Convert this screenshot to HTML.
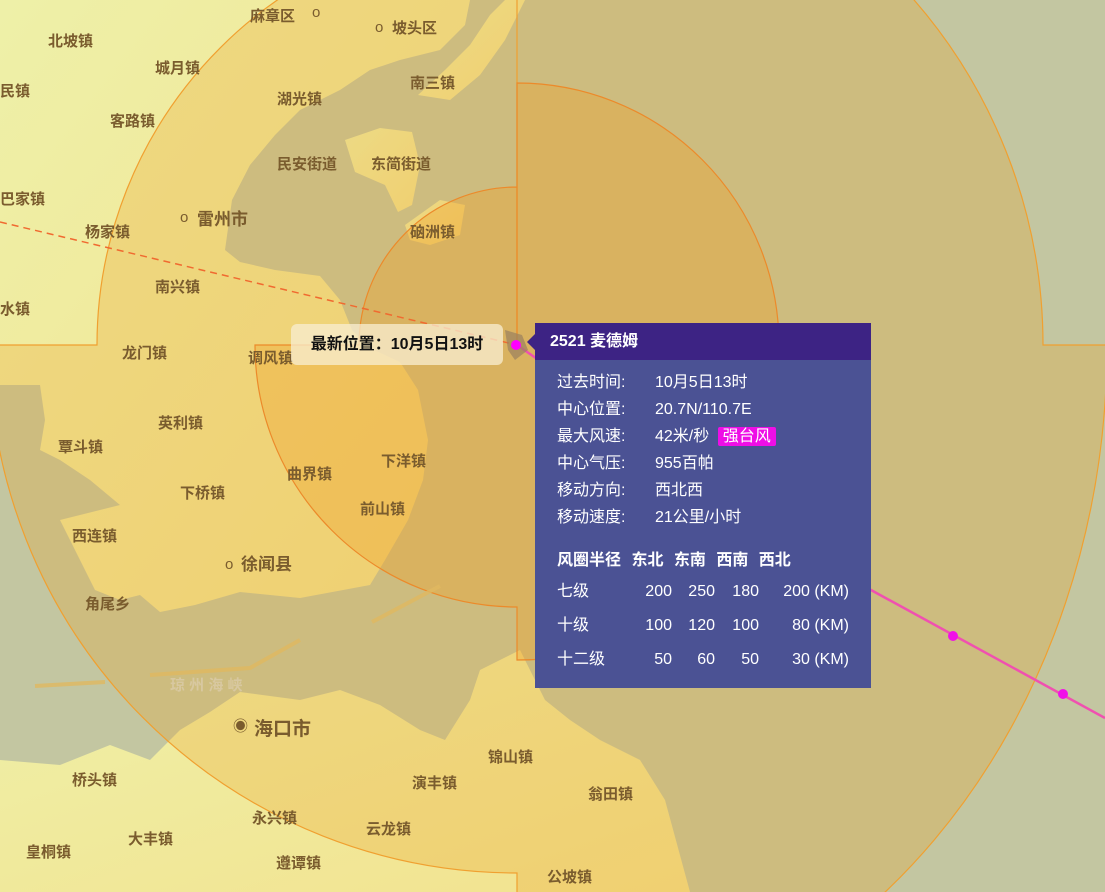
<!DOCTYPE html>
<html><head><meta charset="utf-8"><style>
html,body{margin:0;padding:0;width:1105px;height:892px;overflow:hidden;background:#c3c6a1;font-family:"Liberation Sans","Noto Sans CJK SC",sans-serif;position:relative}
svg{position:absolute;left:0;top:0}
.t{font-family:"Liberation Sans","Noto Sans CJK SC",sans-serif;font-size:15px;fill:#7a5c2e;font-weight:bold}
#lbl{position:absolute;left:291px;top:324px;width:212px;height:41px;background:rgba(248,238,210,.75);border-radius:6px;font-weight:bold;font-size:16px;line-height:41px;text-align:center;color:#111}
#pop{position:absolute;left:535px;top:323px;width:336px;height:365px;background:#4b5294;color:#fff;font-size:16px}
#pop .h{height:37px;background:#3d2384;font-weight:bold;font-size:16px;line-height:37px;padding-left:15px}
#pop .h:before{content:"";position:absolute;left:-8px;top:11px;border:8px solid transparent;border-right-color:#3d2384;border-left:0}
.r{position:absolute;left:22px;white-space:nowrap;line-height:27px;height:27px}
.r span{position:absolute;left:98px;top:0}
.tag{background:#ee0ee6;padding:1px 5px;border-radius:2px;margin-left:4px;font-style:normal}
.k{position:absolute;left:22px;white-space:nowrap;width:310px;height:30px;line-height:30px}
.k b{position:absolute;top:0;text-align:right;font-weight:normal;line-height:30px}
</style></head><body>
<svg width="1105" height="892" viewBox="0 0 1105 892">
<defs><linearGradient id="lg" x1="0" y1="0" x2="1" y2="1"><stop offset="0" stop-color="#eef0a8"/><stop offset="1" stop-color="#f3e28e"/></linearGradient></defs>
<path fill="url(#lg)" d="M0,0 L470,0 L465,25 L440,50 L400,60 L370,70 L340,90 L300,110 L275,135 L250,165 L232,200 L225,250 L240,262 L275,270 L320,276 L340,300 L352,330 L370,348 L400,362 L418,390 L428,440 L423,480 L408,520 L385,560 L370,585 L300,598 L240,592 L195,605 L160,612 L140,595 L120,600 L95,590 L80,560 L60,520 L120,505 L90,480 L60,460 L40,450 L45,420 L40,385 L0,385 Z"/>
<path fill="url(#lg)" d="M345,140 L380,128 L412,132 L420,165 L412,205 L398,212 L385,185 L355,172 Z"/>
<path fill="url(#lg)" d="M418,95 L445,70 L470,45 L490,15 L505,0 L525,0 L505,40 L480,75 L450,100 Z"/>
<path fill="url(#lg)" d="M405,225 L440,200 L465,205 L460,235 L430,245 L410,240 Z"/>
<path fill="url(#lg)" d="M0,880 L0,760 L60,765 L110,745 L150,760 L180,730 L210,712 L240,692 L300,700 L340,690 L380,705 L420,730 L445,740 L470,700 L480,670 L520,650 L545,700 L570,720 L600,740 L640,760 L665,800 L690,892 L0,892 Z"/>
<path fill="rgba(232,160,40,0.28)" stroke="#f0a030" stroke-width="1.2" d="M517,345 L517,-181 A526,526 0 0 1 1043,345 L1107,345 A590,700 0 0 1 517,1045 L517,873 A528,528 0 0 1 -11,345 L97,345 A420,420 0 0 1 517,-75 Z"/>
<path fill="rgba(240,160,40,0.35)" stroke="#ec8a2a" stroke-width="1.2" d="M517,345 L517,83 A262,262 0 0 1 779,345 L832,345 A315,315 0 0 1 517,660 L517,607 A262,262 0 0 1 255,345 L359,345 A158,158 0 0 1 517,187 Z"/>
<path d="M0,222 L517,345" stroke="#f06a30" stroke-width="1.5" stroke-dasharray="7,5" fill="none"/>
<path d="M517,345 L871,590 L1105,718" stroke="#f050b0" stroke-width="2.5" fill="none"/>
<circle cx="953" cy="636" r="5" fill="#f010e8"/><circle cx="1063" cy="694" r="5" fill="#f010e8"/>
<path d="M505,330 L522,335 L528,350 L515,360 L508,350 Z" fill="#9a8060" opacity=".7"/>
<circle cx="516" cy="345" r="5" fill="#ff00ff"/>
<path d="M372,622 L440,586 M300,640 L250,668 L150,675 M105,682 L35,686" stroke="#e0b860" stroke-width="4" fill="none" opacity=".8"/>
<g class="t">
<text x="250" y="21">麻章区</text><text x="312" y="17" font-weight="normal">o</text>
<text x="375" y="32" font-weight="normal">o</text><text x="392" y="33">坡头区</text>
<text x="48" y="46">北坡镇</text><text x="155" y="73">城月镇</text><text x="410" y="88">南三镇</text>
<text x="0" y="96">民镇</text><text x="277" y="104">湖光镇</text><text x="110" y="126">客路镇</text>
<text x="277" y="169">民安街道</text><text x="371" y="169">东简街道</text><text x="0" y="204">巴家镇</text>
<text x="180" y="222" font-weight="normal">o</text><text x="197" y="225" font-size="17">雷州市</text>
<text x="85" y="237">杨家镇</text><text x="410" y="237">硇洲镇</text><text x="155" y="292">南兴镇</text>
<text x="0" y="314">水镇</text><text x="122" y="358">龙门镇</text><text x="248" y="363">调风镇</text>
<text x="158" y="428">英利镇</text><text x="58" y="452">覃斗镇</text><text x="381" y="466">下洋镇</text>
<text x="287" y="479">曲界镇</text><text x="180" y="498">下桥镇</text><text x="360" y="514">前山镇</text>
<text x="72" y="541">西连镇</text><text x="225" y="569" font-weight="normal">o</text><text x="241" y="570" font-size="17">徐闻县</text>
<text x="85" y="609">角尾乡</text><text x="170" y="690" fill="#d8c8a0" font-size="15">琼 州 海 峡</text>
<text x="233" y="731" font-weight="normal">◉</text><text x="254" y="735" font-size="19">海口市</text>
<text x="488" y="762">锦山镇</text><text x="72" y="785">桥头镇</text><text x="412" y="788">演丰镇</text>
<text x="588" y="799">翁田镇</text><text x="252" y="823">永兴镇</text><text x="128" y="844">大丰镇</text>
<text x="366" y="834">云龙镇</text><text x="26" y="857">皇桐镇</text><text x="276" y="868">遵谭镇</text>
<text x="547" y="882">公坡镇</text>
</g>
</svg>
<div id="lbl">最新位置：10月5日13时</div>
<div id="pop"><div class="h">2521 麦德姆</div>
<div class="r" style="top:46px">过去时间:<span>10月5日13时</span></div>
<div class="r" style="top:73px">中心位置:<span>20.7N/110.7E</span></div>
<div class="r" style="top:100px">最大风速:<span>42米/秒 <i class="tag">强台风</i></span></div>
<div class="r" style="top:127px">中心气压:<span>955百帕</span></div>
<div class="r" style="top:154px">移动方向:<span>西北西</span></div>
<div class="r" style="top:181px">移动速度:<span>21公里/小时</span></div>
<div class="r" style="top:224px;font-weight:bold;word-spacing:6px">风圈半径 东北 东南 西南 西北</div>
<div class="k" style="top:254px">七级<b style="left:70px;width:45px">200</b><b style="left:115px;width:43px">250</b><b style="left:158px;width:44px">180</b><b style="left:202px;width:90px">200 (KM)</b></div>
<div class="k" style="top:288px">十级<b style="left:70px;width:45px">100</b><b style="left:115px;width:43px">120</b><b style="left:158px;width:44px">100</b><b style="left:202px;width:90px">80 (KM)</b></div>
<div class="k" style="top:322px">十二级<b style="left:70px;width:45px">50</b><b style="left:115px;width:43px">60</b><b style="left:158px;width:44px">50</b><b style="left:202px;width:90px">30 (KM)</b></div>
</div>
</body></html>
